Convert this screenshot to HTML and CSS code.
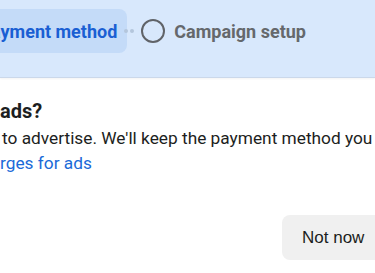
FILE: index.html
```html
<!DOCTYPE html>
<html lang="en">
  <head>
    <meta charset="UTF-8" />
    <meta name="viewport" content="width=device-width, initial-scale=1.0" />
    <title>Payment method</title>
    <link rel="stylesheet" href="styles.css">
  </head>
  <body>
    <div class="steps">
      <div class="step active">ayment method</div>
      <span class="connector"><i></i><i></i></span>
      <div class="step">
        <span class="step-circle"></span>
        Campaign setup
      </div>
    </div>

    <div class="content">
      <h2 class="title">ads?</h2>
      <p class="text">to advertise. We'll keep the payment method you</p>
      <a class="link" href="#">rges for ads</a>
      <div class="actions">
        <button class="btn">Not now</button>
      </div>
    </div>
  </body>
</html>
```

FILE: styles.css
```css
:root {
  --band-color: #d8e8fc;
  --pill-color: #c4dbf8;
  --blue-text: #1a5fd3;
  --gray-text: #65686c;
  --font-color: #1c1e21;
  --link-color: #1b6ad8;
}

body {
  margin: 0;
  padding: 0;
  background-color: #fff;
  font-family: Roboto, "Liberation Sans", Arial, sans-serif;
  color: var(--font-color);
  overflow: hidden;
}

.steps {
  display: flex;
  align-items: flex-start;
  height: 68px;
  padding-top: 9px;
  background-color: var(--band-color);
  border-bottom: 1px solid #cbd8ea;
  box-shadow: 0 1px 2px rgba(0, 0, 0, 0.05);
}

.step {
  display: flex;
  align-items: center;
  gap: 9px;
  height: 44px;
  font-size: 18px;
  font-weight: bold;
  color: var(--gray-text);
}

.step.active {
  margin-left: -9px;
  padding: 0 10px 0 0;
  background-color: var(--pill-color);
  border-radius: 0 8px 8px 0;
  color: var(--blue-text);
}

.connector {
  display: flex;
  align-items: center;
  gap: 2px;
  height: 44px;
  margin: 0 7px 0 -3px;
}

.connector i {
  width: 4px;
  height: 4px;
  border-radius: 50%;
  background-color: #b4c6dc;
}

.step-circle {
  width: 20px;
  height: 20px;
  border: 2.5px solid #606368;
  border-radius: 50%;
}

.content {
  padding: 21px 0 0 0;
}

.title {
  margin: 0;
  font-size: 20px;
  font-weight: bold;
  line-height: 24px;
}

.text {
  margin: 3px 0 0 2px;
  font-size: 17.3px;
  line-height: 25px;
}

.link {
  display: block;
  font-size: 17.3px;
  line-height: 25px;
  color: var(--link-color);
  text-decoration: none;
}

.actions {
  display: flex;
  justify-content: flex-end;
  margin-top: 39px;
}

.btn {
  width: 100px;
  height: 45px;
  margin-right: -7px;
  padding: 0 0 0 20px;
  text-align: left;
  background-color: #f0f0f0;
  border: none;
  border-radius: 8px;
  font-family: "Liberation Sans", Arial, sans-serif;
  font-size: 17px;
  color: var(--font-color);
}
```
